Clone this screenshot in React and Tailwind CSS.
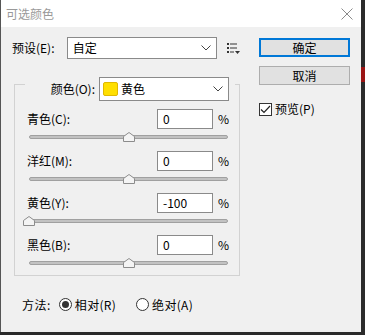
import React from 'react';

const FONT = { fontFamily: '"Microsoft YaHei", "Noto Sans CJK SC", "Noto Sans", sans-serif' };

const Chevron = () => (
    <svg width="10" height="6" viewBox="0 0 10 6" className="shrink-0">
        <path d="M0.5 0.5 L5 5 L9.5 0.5" fill="none" stroke="#444" strokeWidth="1" />
    </svg>
);

const PresetIcon = () => (
    <svg width="13" height="11" viewBox="0 0 13 11" className="shrink-0">
        <rect x="0" y="0" width="2" height="2" fill="#333" />
        <rect x="3" y="0.5" width="7" height="1" fill="#333" />
        <rect x="0" y="4" width="2" height="2" fill="#333" />
        <rect x="3" y="4.5" width="7" height="1" fill="#333" />
        <rect x="0" y="8" width="2" height="2" fill="#333" />
        <rect x="3" y="8.5" width="4" height="1" fill="#333" />
        <path d="M8 8 L13 8 L10.5 11 Z" fill="#333" />
    </svg>
);

const Thumb = () => (
    <svg width="12" height="10" viewBox="0 0 12 10">
        <path d="M0.5 4.5 L6 0.5 L11.5 4.5 L11.5 9.5 L0.5 9.5 Z" fill="#f4f4f4" stroke="#8c8c8c" strokeWidth="1" />
    </svg>
);

// one channel row: label, number box, slider
const Channel = ({ label, value }) => {
    const pos = ((value + 100) / 200) * 199;
    return (
        <div className="flex flex-col">
            <div className="h-[20px] flex items-center pl-[12px]">
                <span className="w-[130px] text-[12px] text-black">{label}</span>
                <div className="w-[56px] h-[20px] bg-white border border-[#8a8a8a] flex items-center pl-[5px] text-[12px] text-black">
                    {value}
                </div>
                <span className="ml-[5px] text-[12px] text-black">%</span>
            </div>
            <div className="h-[22px] relative ml-[14px] w-[199px]">
                <div className="mt-[6px] h-[4px] rounded-full bg-[#c2c2c2] border border-[#a0a0a0]" />
                <div className="absolute top-[3px] -translate-x-1/2 leading-none" style={{ left: pos }}>
                    <Thumb />
                </div>
            </div>
        </div>
    );
};

const Radio = ({ checked, label }) => (
    <div className="flex items-center gap-[3px]">
        <div className="w-[13px] h-[13px] rounded-full border border-[#333] bg-white flex items-center justify-center">
            {checked && <div className="w-[7px] h-[7px] rounded-full bg-[#333]" />}
        </div>
        <span className="text-[12px] text-black tracking-[0.3px]">{label}</span>
    </div>
);

export default function App() {
    return (
        <div className="w-[365px] h-[335px] bg-[#2b2b2b] relative overflow-hidden" style={FONT}>
            {/* background app peeking at right edge */}
            <div className="absolute right-0 top-[67px] w-[4px] h-[15px] bg-[#9b1414]" />

            <div className="w-[361px] h-[332px] bg-[#f0f0f0] border-l border-[#555] flex flex-col">
                {/* Title bar */}
                <div className="h-[27px] bg-white flex items-center justify-between pl-[5px] pr-[8px]">
                    <span className="text-[12px] text-[#999]">可选颜色</span>
                    <svg width="12" height="12" viewBox="0 0 12 12">
                        <path d="M0.5 0.5 L11.5 11.5 M11.5 0.5 L0.5 11.5" stroke="#8a8a8a" strokeWidth="1" />
                    </svg>
                </div>

                <div className="flex">
                    {/* Left column */}
                    <div className="flex flex-col w-[239px]">
                        <div className="mt-[10px] ml-[11px] h-[22px] flex items-center">
                            <span className="text-[12px] text-black w-[55px]">预设(E):</span>
                            <div className="w-[151px] h-[22px] bg-white border border-[#8a8a8a] flex items-center justify-between pl-[5px] pr-[5px]">
                                <span className="text-[12px] text-black">自定</span>
                                <Chevron />
                            </div>
                            <div className="ml-[10px]">
                                <PresetIcon />
                            </div>
                        </div>

                        {/* Group box */}
                        <div className="mt-[25px] ml-[13px] w-[226px] h-[192px] border border-[#d2d2d2] flex flex-col">
                            <div className="-mt-[8px] ml-[10px] w-[210px] h-[24px] bg-[#f0f0f0] flex items-center justify-end gap-[4px] pr-[6px]">
                                <span className="text-[12px] text-black">颜色(O):</span>
                                <div className="w-[130px] h-[24px] bg-white border border-[#8a8a8a] flex items-center pl-[3px] pr-[5px]">
                                    <div className="w-[15px] h-[14px] rounded-[2px] bg-[#ffdf00] border border-[#e0b800]" />
                                    <span className="ml-[3px] text-[12px] text-black flex-1">黄色</span>
                                    <Chevron />
                                </div>
                            </div>
                            <div className="mt-[8px] flex flex-col">
                                <Channel label="青色(C):" value={0} />
                                <Channel label="洋红(M):" value={0} />
                                <Channel label="黄色(Y):" value={-100} />
                                <Channel label="黑色(B):" value={0} />
                            </div>
                        </div>

                        <div className="mt-[20px] ml-[21px] h-[17px] flex items-center">
                            <span className="text-[12px] text-black tracking-[0.5px]">方法:</span>
                            <div className="ml-[8px]">
                                <Radio checked label="相对(R)" />
                            </div>
                            <div className="ml-[20px]">
                                <Radio label="绝对(A)" />
                            </div>
                        </div>
                    </div>

                    {/* Right column */}
                    <div className="ml-[19px] pt-[11px] flex flex-col">
                        <div className="w-[91px] h-[19px] border-2 border-[#0078d7] bg-[#e1e1e1] flex items-center justify-center text-[12px] text-black">
                            确定
                        </div>
                        <div className="mt-[9px] w-[91px] h-[19px] border border-[#adadad] bg-[#e1e1e1] flex items-center justify-center text-[12px] text-black">
                            取消
                        </div>
                        <div className="mt-[15px] flex items-center gap-[3px]">
                            <div className="w-[13px] h-[13px] border border-[#333] bg-white flex items-center justify-center">
                                <svg width="11" height="9" viewBox="0 0 11 9">
                                    <path d="M1 4.5 L4 7.5 L10 1" fill="none" stroke="#222" strokeWidth="1.2" />
                                </svg>
                            </div>
                            <span className="text-[12px] text-black">预览(P)</span>
                        </div>
                    </div>
                </div>
            </div>
        </div>
    );
}
